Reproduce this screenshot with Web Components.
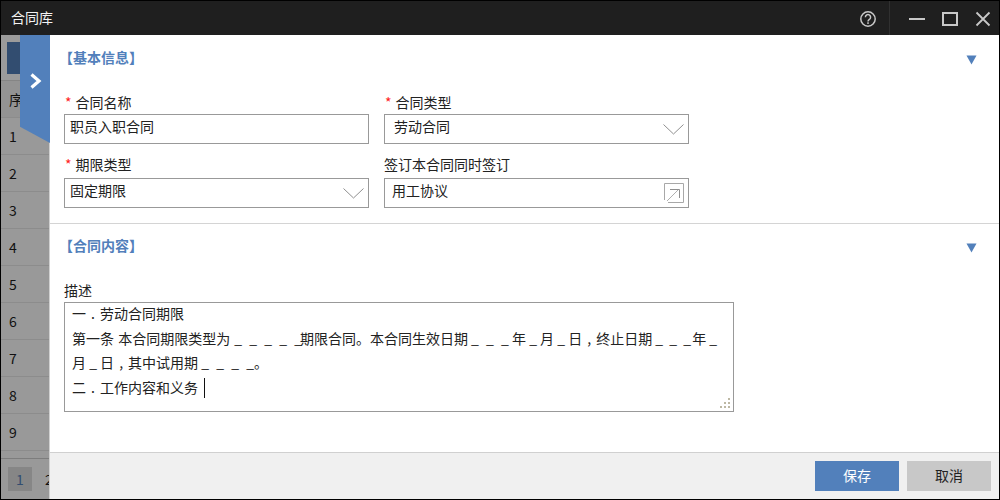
<!DOCTYPE html>
<html>
<head>
<meta charset="utf-8">
<title>合同库</title>
<style>
html, body { margin: 0; padding: 0; }
body { width: 1000px; height: 500px; overflow: hidden; font-family: "Noto Sans CJK SC", "Liberation Sans", sans-serif; font-size: 14px; color: #222; }
.blank { word-spacing: 4px; }
.blank.first { margin: 0 -2px 0 1px; }
.blank.last { word-spacing: 3px; margin-right: -2px; }
.lead { margin-right: 1px; }
.punct { display: inline-block; width: 14px; text-align: center; }
.caret { display: inline-block; width: 1px; height: 20px; background: #111; vertical-align: -5px; margin-left: 3px; }
</style>
</head>
<body>
<app-window>
  <title-bar slot="top">合同库</title-bar>
  <back-list slot="side"></back-list>
  <side-drawer slot="main">
    <form-section heading="【基本信息】">
      <div style="display:grid;grid-template-columns:305px 305px;column-gap:15px;row-gap:10px">
        <form-field label="合同名称" required><text-box>职员入职合同</text-box></form-field>
        <form-field label="合同类型" required><text-box kind="select" style="padding-left:9px">劳动合同</text-box></form-field>
        <form-field label="期限类型" required style="--label-h:24px"><text-box kind="select">固定期限</text-box></form-field>
        <form-field label="签订本合同同时签订" style="--label-h:24px"><text-box kind="link" style="padding-left:7px">用工协议</text-box></form-field>
      </div>
    </form-section>
    <form-section heading="【合同内容】" last>
      <form-field label="描述">
        <memo-box>
          <div>一<span class="punct">.</span>劳动合同期限</div>
          <div><span class="lead">第一条</span> 本合同期限类型为 <span class="blank first">_ _ _ _ _</span>期限合同。本合同生效日期 <span class="blank">_ _ _</span> 年 _ 月 _ 日<span class="punct">,</span>终止日期 <span class="blank last">_ _ _</span> 年 _</div>
          <div>月 _ 日<span class="punct">,</span>其中试用期 <span class="blank">_ _ _ _</span>。</div>
          <div>二<span class="punct">.</span>工作内容和义务 <i class="caret"></i></div>
        </memo-box>
      </form-field>
    </form-section>
    <drawer-footer slot="footer">
      <action-button primary>保存</action-button>
      <action-button>取消</action-button>
    </drawer-footer>
  </side-drawer>
</app-window>

<script>
class AppWindow extends HTMLElement {
  constructor() {
    super();
    this.attachShadow({ mode: 'open' });
    this.shadowRoot.innerHTML = `
<style>
:host { display: flex; flex-direction: column; width: 1000px; height: 500px; box-sizing: border-box; border: 1px solid #000; background: #fff; position: relative; }
.body { flex: 1; display: flex; min-height: 0; }
.side { width: 48px; flex: none; overflow: hidden; }
.main { flex: 1; min-width: 0; display: flex; }
.flag { position: absolute; left: 19px; top: 34px; width: 30px; height: 108px; background: #5280bb; clip-path: polygon(0 0, 100% 0, 100% 100%, 0 85%); }
.flag svg { position: absolute; left: 9px; top: 38px; }
</style>
<slot name="top"></slot>
<div class="body">
  <div class="side"><slot name="side"></slot></div>
  <div class="main"><slot name="main"></slot></div>
</div>
<div class="flag"><svg width="14" height="16" viewBox="0 0 14 16"><path d="M2.5 1.5 L10 8 L2.5 14.5" fill="none" stroke="#fff" stroke-width="3.2"/></svg></div>`;
  }
}

class TitleBar extends HTMLElement {
  constructor() {
    super();
    this.attachShadow({ mode: 'open' });
    this.shadowRoot.innerHTML = `
<style>
:host { display: flex; align-items: center; height: 34px; flex: none; background: #1f1f1f; color: #f2f2f2; font-size: 14px; padding-left: 10px; }
.name { flex: 1; margin-bottom: 3px; }
.tools { display: flex; align-items: stretch; height: 100%; }
.help { width: 43px; display: flex; align-items: center; justify-content: center; border-right: 1px solid #303030; margin-right: 10px; padding-top: 2px; box-sizing: border-box; }
.btn { width: 33px; display: flex; align-items: center; justify-content: center; padding-top: 2px; box-sizing: border-box; }
svg { display: block; }
</style>
<div class="name"><slot></slot></div>
<div class="tools">
  <div class="help"><svg width="18" height="18" viewBox="0 0 18 18"><circle cx="9" cy="9" r="7.2" fill="none" stroke="#c8c8c8" stroke-width="1.5"/><path d="M6.4 7.2a2.6 2.6 0 1 1 4 2.2c-.9.6-1.4 1-1.4 2" fill="none" stroke="#c8c8c8" stroke-width="1.5"/><rect x="8.2" y="12.3" width="1.6" height="1.6" fill="#c8c8c8"/></svg></div>
  <div class="btn"><svg width="16" height="16" viewBox="0 0 16 16"><rect x="0" y="7" width="16" height="2" fill="#c8c8c8"/></svg></div>
  <div class="btn"><svg width="16" height="16" viewBox="0 0 16 16"><rect x="1" y="2" width="14" height="12" fill="none" stroke="#c8c8c8" stroke-width="2"/></svg></div>
  <div class="btn"><svg width="16" height="16" viewBox="0 0 16 16"><path d="M1.5 1.5 L14.5 14.5 M14.5 1.5 L1.5 14.5" stroke="#c8c8c8" stroke-width="1.8"/></svg></div>
</div>`;
  }
}

class BackList extends HTMLElement {
  constructor() {
    super();
    this.attachShadow({ mode: 'open' });
    const rows = [1, 2, 3, 4, 5, 6, 7, 8, 9].map(n => `<div class="row">${n}</div>`).join('');
    this.shadowRoot.innerHTML = `
<style>
:host { display: flex; flex-direction: column; width: 48px; height: 100%; background: #999; color: #111; font-size: 14px; overflow: hidden; }
.bar { height: 46px; flex: none; box-sizing: border-box; padding: 7px 0 0 6px; border-bottom: 1px solid #858585; background: #9b9b9b; }
.bar div { width: 42px; height: 32px; background: #324d70; }
.row, .head { flex: none; height: 37px; box-sizing: border-box; padding-left: 8px; display: flex; align-items: center; border-bottom: 1px solid #8c8c8c; white-space: nowrap; }
.head { background: #939393; }
.rows { flex: 1; border-bottom: 1px solid #7d7d7d; }
.pager { height: 40px; flex: none; display: flex; align-items: center; padding-left: 7px; gap: 13px; }
.cur { width: 24px; height: 24px; background: #868686; color: #324d70; display: flex; align-items: center; justify-content: center; flex: none; }
</style>
<div class="bar"><div></div></div>
<div class="rows"><div class="head">序号</div>${rows}</div>
<div class="pager"><span class="cur">1</span><span>2</span></div>`;
  }
}

class SideDrawer extends HTMLElement {
  constructor() {
    super();
    this.attachShadow({ mode: 'open' });
    this.shadowRoot.innerHTML = `
<style>
:host { display: flex; flex-direction: column; flex: 1; min-width: 0; border-left: 1px solid #d0d0d0; background: #fff; }
.content { flex: 1; min-height: 0; }
</style>
<div class="content"><slot></slot></div>
<slot name="footer"></slot>`;
  }
}

class FormSection extends HTMLElement {
  constructor() {
    super();
    this.attachShadow({ mode: 'open' });
    this.shadowRoot.innerHTML = `
<style>
:host { display: block; border-bottom: 1px solid #d4d4d4; padding: 1px 0 15px; }
:host([last]) { border-bottom: 0; padding: 0; }
.head { display: flex; align-items: center; justify-content: space-between; height: 44px; padding: 0 22px 0 9px; color: #5280bb; font-size: 14px; font-weight: 700; }
.title { margin-bottom: 2px; }
.body { padding: 12px 0 0 14px; }
svg { display: block; margin-top: 3px; }
</style>
<div class="head"><span class="title"></span><svg width="11" height="10" viewBox="0 0 11 10"><path d="M0.5 0.5 H10.5 L5.5 9.5 Z" fill="#5280bb"/></svg></div>
<div class="body"><slot></slot></div>`;
    this.shadowRoot.querySelector('.title').textContent = this.getAttribute('heading');
  }
}

class FormField extends HTMLElement {
  constructor() {
    super();
    this.attachShadow({ mode: 'open' });
    this.shadowRoot.innerHTML = `
<style>
:host { display: block; }
.label { height: var(--label-h, 22px); line-height: 20px; font-size: 14px; color: #222; white-space: nowrap; }
.star { color: #f22; margin: 0 4px 0 1px; }
</style>
<div class="label"><span class="star" hidden>*</span><span class="text"></span></div>
<slot></slot>`;
    this.shadowRoot.querySelector('.text').textContent = this.getAttribute('label');
    this.shadowRoot.querySelector('.star').hidden = !this.hasAttribute('required');
  }
}

class TextBox extends HTMLElement {
  constructor() {
    super();
    this.attachShadow({ mode: 'open' });
    const kind = this.getAttribute('kind');
    let icon = '';
    if (kind === 'select') {
      icon = '<svg width="21" height="11" viewBox="0 0 21 11"><path d="M0.5 0.5 L10.5 10 L20.5 0.5" fill="none" stroke="#8f8f8f"/></svg>';
    } else if (kind === 'link') {
      icon = '<svg width="20" height="20" viewBox="0 0 20 20"><path d="M0.5 17 V0.5 H19.5 V19.5 H4" fill="none" stroke="#a8a8a8"/><path d="M3 18 L15 6" fill="none" stroke="#b0b0b0"/><path d="M6 6.5 H15.5 V15" fill="none" stroke="#8f8f8f"/></svg>';
    }
    this.shadowRoot.innerHTML = `
<style>
:host { display: flex; align-items: center; justify-content: space-between; box-sizing: border-box; height: 30px; border: 1px solid #999; padding: 0 4px 0 5px; font-size: 14px; color: #222; }
span { margin-bottom: 6px; line-height: 20px; }
svg { display: block; flex: none; }
</style>
<span><slot></slot></span>${icon}`;
  }
}

class MemoBox extends HTMLElement {
  constructor() {
    super();
    this.attachShadow({ mode: 'open' });
    this.shadowRoot.innerHTML = `
<style>
:host { display: block; box-sizing: border-box; width: 670px; height: 110px; border: 1px solid #999; padding: 0 7px; font-size: 14px; line-height: 24.5px; color: #222; position: relative; white-space: nowrap; }
.lines { margin-top: -2px; }
svg { position: absolute; right: 2px; bottom: 2px; }
</style>
<div class="lines"><slot></slot></div>
<svg width="11" height="11" viewBox="0 0 11 11" fill="#bdb8a4"><rect x="8" y="0" width="2" height="2"/><rect x="4" y="4" width="2" height="2"/><rect x="8" y="4" width="2" height="2"/><rect x="0" y="8" width="2" height="2"/><rect x="4" y="8" width="2" height="2"/><rect x="8" y="8" width="2" height="2"/></svg>`;
  }
}

class DrawerFooter extends HTMLElement {
  constructor() {
    super();
    this.attachShadow({ mode: 'open' });
    this.shadowRoot.innerHTML = `
<style>
:host { display: flex; justify-content: flex-end; align-items: flex-start; gap: 8px; height: 47px; flex: none; box-sizing: border-box; border-top: 1px solid #d0d0d0; background: #f0f0f0; padding: 8px 8px 0 0; }
</style>
<slot></slot>`;
  }
}

class ActionButton extends HTMLElement {
  constructor() {
    super();
    this.attachShadow({ mode: 'open' });
    this.shadowRoot.innerHTML = `
<style>
:host { display: flex; align-items: center; justify-content: center; box-sizing: border-box; width: 84px; height: 30px; padding-bottom: 3px; background: #c8c8c8; color: #222; font-size: 14px; }
:host([primary]) { background: #5280bb; color: #fff; }
</style>
<slot></slot>`;
  }
}

customElements.define('app-window', AppWindow);
customElements.define('title-bar', TitleBar);
customElements.define('back-list', BackList);
customElements.define('side-drawer', SideDrawer);
customElements.define('form-section', FormSection);
customElements.define('form-field', FormField);
customElements.define('text-box', TextBox);
customElements.define('memo-box', MemoBox);
customElements.define('drawer-footer', DrawerFooter);
customElements.define('action-button', ActionButton);
</script>
</body>
</html>
